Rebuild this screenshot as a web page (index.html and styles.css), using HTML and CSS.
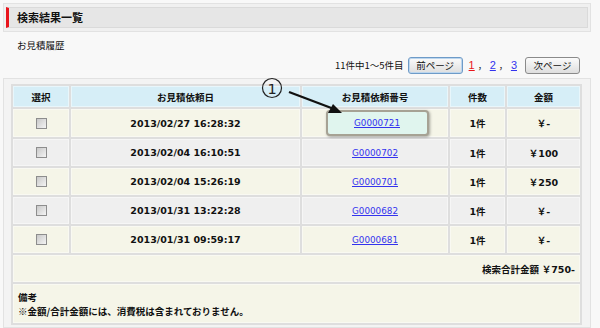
FILE: index.html
```html
<!DOCTYPE html>
<html lang="ja">
<head>
<meta charset="utf-8">
<link rel="stylesheet" href="styles.css">
</head>
<body>
<div class="page">
  <div class="title-box">
    <h1 class="title-bar">検索結果一覧</h1>
  </div>
  <p class="history">お見積履歴</p>
  <div class="pager">
    <span class="count">11件中1～5件目</span>
    <button class="btn btn-focus">前ページ</button>
    <a class="pnum current" href="#">1</a><span class="sep">，</span><a class="pnum" href="#">2</a><span class="sep">，</span><a class="pnum last" href="#">3</a>
    <button class="btn">次ページ</button>
  </div>
  <div class="frame">
    <table class="results">
      <colgroup>
        <col class="c-sel"><col class="c-date"><col class="c-no"><col class="c-qty"><col class="c-amt">
      </colgroup>
      <thead>
        <tr><th>選択</th><th>お見積依頼日</th><th>お見積依頼番号</th><th>件数</th><th>金額</th></tr>
      </thead>
      <tbody>
        <tr class="odd"><td><input type="checkbox" class="chk"></td><td class="num">2013/02/27 16:28:32</td><td><span class="hl"><a href="#" class="link">G0000721</a></span></td><td class="bold">1件</td><td class="num">￥-</td></tr>
        <tr class="even"><td><input type="checkbox" class="chk"></td><td class="num">2013/02/04 16:10:51</td><td><a href="#" class="link">G0000702</a></td><td class="bold">1件</td><td class="num">￥100</td></tr>
        <tr class="odd"><td><input type="checkbox" class="chk"></td><td class="num">2013/02/04 15:26:19</td><td><a href="#" class="link">G0000701</a></td><td class="bold">1件</td><td class="num">￥250</td></tr>
        <tr class="even"><td><input type="checkbox" class="chk"></td><td class="num">2013/01/31 13:22:28</td><td><a href="#" class="link">G0000682</a></td><td class="bold">1件</td><td class="num">￥-</td></tr>
        <tr class="odd"><td><input type="checkbox" class="chk"></td><td class="num">2013/01/31 09:59:17</td><td><a href="#" class="link">G0000681</a></td><td class="bold">1件</td><td class="num">￥-</td></tr>
        <tr class="total"><td colspan="5"><span class="tlabel">検索合計金額</span> <span class="num">￥750-</span></td></tr>
        <tr class="note"><td colspan="5"><div>備考</div><div>※金額/合計金額には、消費税は含まれておりません。</div></td></tr>
      </tbody>
    </table>
  </div>
  <svg class="annot" width="90" height="40" viewBox="0 0 90 40">
    <circle cx="12" cy="12" r="9.5" fill="none" stroke="#222" stroke-width="1.2"/>
    <text x="12" y="17.5" text-anchor="middle" font-family="DejaVu Sans, sans-serif" font-size="14.5" fill="#222">1</text>
    <line x1="29" y1="16" x2="74" y2="33" stroke="#111" stroke-width="2.4"/>
    <polygon points="82,37 68,37 73,28" fill="#111"/>
  </svg>
</div>
</body>
</html>
```
FILE: styles.css
```css
* { box-sizing: border-box; }
html, body { margin: 0; padding: 0; }
body {
  background: #f8f8f8;
  font-family: "Liberation Sans", "Noto Sans CJK JP", sans-serif;
  font-size: 9.5px;
  color: #111;
  width: 600px;
  height: 328px;
  overflow: hidden;
}
.page {
  position: relative;
  width: 588px;
  margin-left: 3px;
  padding-top: 3px;
}
.title-box {
  border: 1px solid #e2e2e2;
  background: #f0f0f0;
  padding: 3px 2px 2px 2px;
  height: 29px;
}
.title-bar {
  margin: 0;
  height: 21px;
  background: #e6e6e6;
  border: 1px solid #dadada;
  border-left: 3px solid #e8141c;
  font-family: "Noto Sans CJK JP", sans-serif;
  font-size: 11px;
  font-weight: bold;
  line-height: 19px;
  padding-left: 8px;
  color: #111;
}
.history {
  margin: 0;
  padding-left: 14px;
  height: 22px;
  line-height: 26px;
  font-family: "Noto Sans CJK JP", sans-serif;
  font-size: 9.5px;
}
.pager {
  display: flex;
  justify-content: flex-end;
  align-items: center;
  height: 22px;
  padding-right: 11px;
  font-family: "Noto Sans CJK JP", sans-serif;
}
.count { font-size: 9.5px; margin-right: 4px; }
.btn {
  height: 17px;
  padding: 0 7px;
  font-family: "Noto Sans CJK JP", sans-serif;
  font-size: 9.5px;
  line-height: 13px;
  color: #111;
  background: linear-gradient(#fbfbfb, #dedede);
  border: 1px solid #8a8a8a;
  border-radius: 3px;
  width: 55px;
}
.btn-focus { border-color: #6e9bc8; box-shadow: 0 0 0 1px #bcd6ee inset; }
.pnum {
  font-family: "Liberation Sans", sans-serif;
  font-size: 11px;
  color: #3333ee;
  margin: 0 2px;
}
.pnum.current { color: #e8141c; margin-left: 6px; }
.pnum.last { margin-right: 8px; }
.sep { font-size: 9px; margin: 0 1px; color: #222; }

.frame {
  margin-top: 2px;
  border: 1px solid #e2e2e2;
  background: #f3f3f3;
  padding: 5px 7px 2px 7px;
}
.results {
  width: 571px;
  table-layout: fixed;
  border-collapse: separate;
  border-spacing: 2px;
  background: #dedede;
}
.c-sel { width: 56px; }
.c-date { width: 229px; }
.c-no { width: 146px; }
.c-qty { width: 55px; }
.c-amt { width: 73px; }
.results th, .results td {
  text-align: center;
  padding: 0;
  border: 1px solid rgba(255,255,255,0.45);
}
.results th {
  background: #d6eef7;
  height: 21px;
  font-family: "Noto Sans CJK JP", sans-serif;
  font-size: 9.5px;
  font-weight: bold;
}
.results td { height: 27px; }
.odd td { background: #f5f5e8; }
.even td { background: #efefef; }
.num {
  font-family: "DejaVu Sans", "Noto Sans CJK JP", sans-serif;
  font-weight: bold;
  font-size: 9.5px;
}
.bold {
  font-family: "DejaVu Sans", "Noto Sans CJK JP", sans-serif;
  font-weight: bold;
  font-size: 9.5px;
}
.link {
  font-family: "DejaVu Sans", sans-serif;
  font-size: 8.8px;
  color: #3333ee;
}
.hl {
  display: inline-block;
  width: 103px;
  height: 26px;
  line-height: 22px;
  margin-left: 4px;
  background: #e0f5ee;
  border: 2px solid #a6a294;
  border-radius: 4px;
  box-shadow: 1px 1px 3px rgba(0,0,0,0.35);
  vertical-align: middle;
}
.chk {
  appearance: none;
  -webkit-appearance: none;
  width: 11px;
  height: 11px;
  margin: 0;
  border: 1px solid #8d8d8d;
  background: linear-gradient(135deg, #c8c8c8, #f4f4f4);
  vertical-align: middle;
}
.total td {
  background: #f5f5e8;
  height: 27px;
  text-align: right;
  padding-right: 4px;
}
.tlabel {
  font-family: "Noto Sans CJK JP", sans-serif;
  font-weight: bold;
  font-size: 9.5px;
}
.note td {
  background: #f5f5e8;
  height: 39px;
  text-align: left;
  padding-left: 4px;
  font-family: "Noto Sans CJK JP", sans-serif;
  font-weight: bold;
  font-size: 9.5px;
  line-height: 14px;
  vertical-align: middle;
}
.annot {
  position: absolute;
  left: 257px;
  top: 76px;
}
```
